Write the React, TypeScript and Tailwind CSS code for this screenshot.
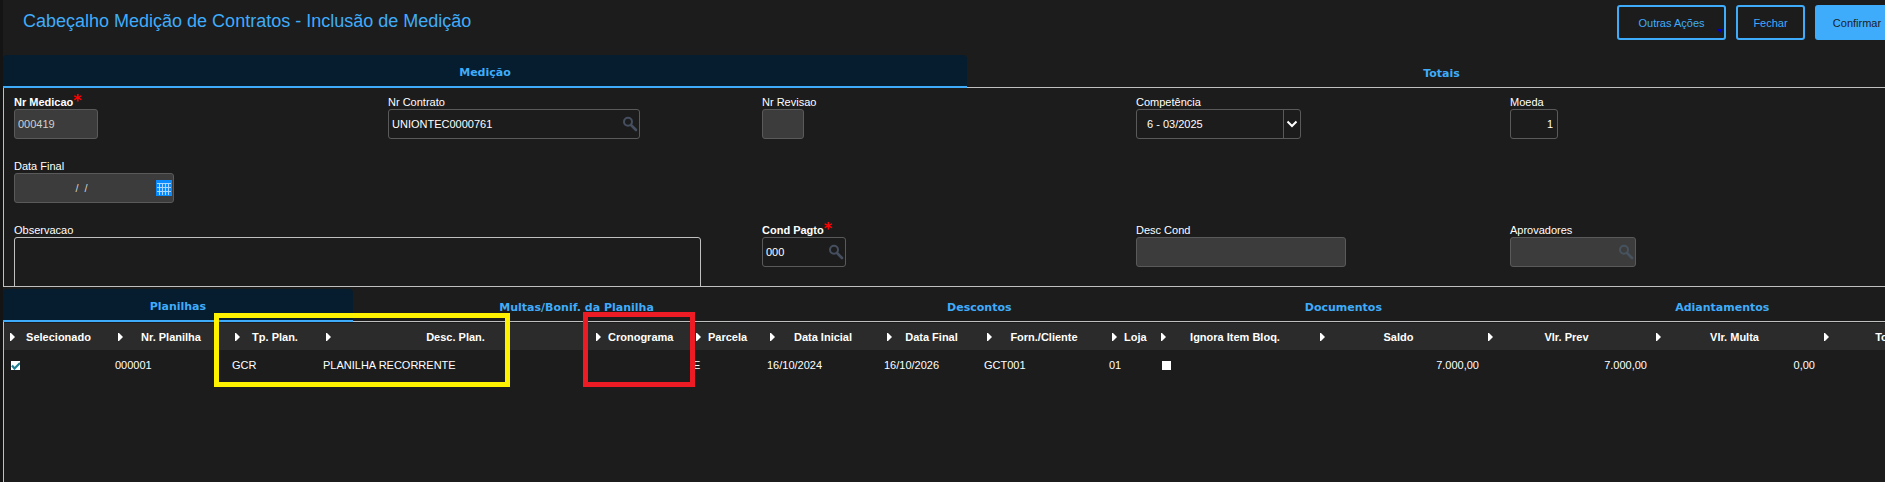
import React from 'react';
import clsx from 'clsx';

const SearchIcon: React.FC<{ dim?: boolean }> = ({ dim }) => (
  <svg
    width="16" height="16" viewBox="0 0 16 16" fill="none"
    className={clsx('shrink-0', dim ? 'text-[#46535f]' : 'text-[#454f60]')}
  >
    <circle cx="6" cy="5.8" r="4" stroke="currentColor" strokeWidth="2" />
    <path d="M9 9 L14 14" stroke="currentColor" strokeWidth="2.6" strokeLinecap="round" />
  </svg>
);

const CalendarIcon = () => (
  <svg width="16" height="16" viewBox="0 0 16 16" className="shrink-0" shapeRendering="crispEdges">
    <rect width="16" height="16" fill="#0a8cff" />
    <path d="M1 3.5H15M1 7.5H15M1 11.5H15M3.5 3V15M6.5 3V15M9.5 3V15M12.5 3V15" stroke="#a9d6ff" strokeWidth="1" />
  </svg>
);

const ChevronIcon = () => (
  <svg width="12" height="8" viewBox="0 0 12 8" fill="none">
    <path d="M1.5 1.5 L6 6 L10.5 1.5" stroke="#fff" strokeWidth="2" />
  </svg>
);

const Arrow = () => (
  <svg width="5" height="8" viewBox="0 0 5 8" className="shrink-0">
    <path d="M0 0 H1 L5 4 L1 8 H0 Z" fill="#fff" />
  </svg>
);

interface FieldProps {
  id: string;
  label: string;
  required?: boolean;
  className?: string;
  children: React.ReactNode;
}

const Field: React.FC<FieldProps> = ({ id, label, required, className, children }) => (
  <div className={clsx('flex flex-col items-start', className)}>
    <label htmlFor={id} className={clsx('flex h-[13px] items-baseline whitespace-nowrap', required && 'font-bold')}>
      <span className="leading-[12px]">{label}</span>
      {required && <span className="font-['DejaVu_Sans',sans-serif] text-base leading-[10px] text-[#ff0000]">*</span>}
    </label>
    {children}
  </div>
);

interface BoxProps {
  id: string;
  width: string;
  value?: string;
  disabled?: boolean;
  inputClass?: string;
  icon?: React.ReactNode;
}

const InputBox: React.FC<BoxProps> = ({ id, width, value = '', disabled, inputClass = 'px-[3px]', icon }) => (
  <div className={clsx('flex h-[30px] items-center rounded-[3px] border border-[#5a5a5a] pr-px', width, disabled ? 'bg-[#3c3c3c] text-[#d0d0d0]' : 'text-white')}>
    <input id={id} defaultValue={value} readOnly={disabled} className={clsx('min-w-0 flex-1 bg-transparent outline-none', inputClass)} />
    {icon}
  </div>
);

const Tabs: React.FC<{ tabs: string[] }> = ({ tabs }) => (
  <div role="tablist" className="flex h-[33px] font-['Verdana','DejaVu_Sans',sans-serif] font-bold text-[#3facfb]">
    {tabs.map((tab, i) => (
      <button
        key={tab}
        role="tab"
        aria-selected={i === 0}
        className={clsx(
          'flex-auto whitespace-nowrap pt-[6px]',
          i === 0 ? 'rounded-t-[4px] border-b-2 border-[#3facfb] bg-[#051d2f]' : 'border-b border-[#c0c0c0]'
        )}
      >
        {tab}
      </button>
    ))}
  </div>
);

const columns = [
  { title: 'Selecionado', width: 'w-[108px]' },
  { title: 'Nr. Planilha', width: 'w-[117px]' },
  { title: 'Tp. Plan.', width: 'w-[91px]' },
  { title: 'Desc. Plan.', width: 'w-[270px]' },
  { title: 'Cronograma', width: 'w-[100px]' },
  { title: 'Parcela', width: 'w-[74px]' },
  { title: 'Data Inicial', width: 'w-[117px]' },
  { title: 'Data Final', width: 'w-[100px]' },
  { title: 'Forn./Cliente', width: 'w-[125px]' },
  { title: 'Loja', width: 'w-[49px]' },
  { title: 'Ignora Item Bloq.', width: 'w-[159px]' },
  { title: 'Saldo', width: 'w-[168px]' },
  { title: 'Vlr. Prev', width: 'w-[168px]' },
  { title: 'Vlr. Multa', width: 'w-[168px]' },
  { title: 'Total Prev.', width: 'w-[168px]' },
];

const row: (string | boolean)[] = [
  true, '000001', 'GCR', 'PLANILHA RECORRENTE', '', 'E', '16/10/2024', '16/10/2026',
  'GCT001', '01', false, '7.000,00', '7.000,00', '0,00', '',
];

const GridCheck: React.FC<{ checked: boolean; label: string }> = ({ checked, label }) => (
  <span className="relative ml-1 block size-[9px]">
    <input type="checkbox" defaultChecked={checked} aria-label={label} className="block size-[9px] appearance-none bg-white" />
    {checked && (
      <svg width="9" height="9" viewBox="0 0 9 9" fill="none" className="pointer-events-none absolute inset-0">
        <path d="M1 4.5 L3.5 7.5 L9 2" stroke="#1f7f92" strokeWidth="2.2" />
      </svg>
    )}
  </span>
);

const outlineBtn = 'rounded-[3px] border-2 border-[#3facfb] text-[#3facfb]';

const App: React.FC = () => (
  <div className="min-h-screen overflow-hidden bg-[#1c1c1c] font-['Liberation_Sans',Arial,sans-serif] text-[11px] text-white">
    {/* the form is a little wider than the window and runs off its right edge */}
    <div className="-mr-[31px] flex min-h-screen flex-col border-l-[3px] border-[#141414]">
      <header className="flex h-[55px] items-start justify-between pl-5 pr-[17px] pt-[5px]">
        <h1 className="text-[18px] leading-8 text-[#3facfb]">Cabeçalho Medição de Contratos - Inclusão de Medição</h1>
        <div className="flex h-[35px] gap-[10px]">
          <button className={clsx(outlineBtn, 'relative w-[109px] pt-px')}>
            Outras Ações
            <span className="absolute bottom-[5px] right-px border-x-[3px] border-t-4 border-x-transparent border-t-[#0000c0]" />
          </button>
          <button className={clsx(outlineBtn, 'w-[69px] pt-px')}>Fechar</button>
          <button className="w-[84px] rounded-[3px] bg-[#3facfb] pt-px text-[#1c1c1c]">Confirmar</button>
        </div>
      </header>

      <Tabs tabs={['Medição', 'Totais']} />
      <section className="h-[199px] overflow-hidden border-b border-l border-[#c0c0c0]">
        <form className="grid grid-cols-5 gap-y-[21px] pl-[10px] pr-[32px] pt-2">
          <Field id="nrMedicao" label="Nr Medicao" required>
            <InputBox id="nrMedicao" width="w-[84px]" value="000419" disabled />
          </Field>
          <Field id="nrContrato" label="Nr Contrato">
            <InputBox id="nrContrato" width="w-[252px]" value="UNIONTEC0000761" icon={<SearchIcon />} />
          </Field>
          <Field id="nrRevisao" label="Nr Revisao">
            <InputBox id="nrRevisao" width="w-[42px]" disabled />
          </Field>
          <Field id="competencia" label="Competência">
            <div className="relative flex h-[30px] w-[165px] rounded-[3px] border border-[#5a5a5a]">
              <select id="competencia" className="w-full appearance-none bg-transparent pl-[10px] outline-none">
                <option>6 - 03/2025</option>
              </select>
              <span className="pointer-events-none absolute inset-y-0 right-0 flex w-[17px] items-center justify-center border-l border-[#5a5a5a]">
                <ChevronIcon />
              </span>
            </div>
          </Field>
          <Field id="moeda" label="Moeda">
            <InputBox id="moeda" width="w-[48px]" value="1" inputClass="px-[3px] text-right" />
          </Field>

          <Field id="dataFinal" label="Data Final" className="col-span-5">
            <InputBox id="dataFinal" width="w-[160px]" value="/  /" disabled inputClass="whitespace-pre pl-[3px] pr-[11px] text-center" icon={<CalendarIcon />} />
          </Field>

          <Field id="observacao" label="Observacao" className="col-span-2">
            <textarea id="observacao" className="h-[70px] w-[687px] resize-none rounded-[3px] border border-[#c0c0c0] bg-transparent p-1 outline-none" />
          </Field>
          <Field id="condPagto" label="Cond Pagto" required>
            <InputBox id="condPagto" width="w-[84px]" value="000" icon={<SearchIcon />} />
          </Field>
          <Field id="descCond" label="Desc Cond">
            <InputBox id="descCond" width="w-[210px]" disabled />
          </Field>
          <Field id="aprovadores" label="Aprovadores">
            <InputBox id="aprovadores" width="w-[126px]" disabled icon={<SearchIcon dim />} />
          </Field>
        </form>
      </section>

      <div className="relative mt-[2px] flex flex-1 flex-col">
        <Tabs tabs={['Planilhas', 'Multas/Bonif. da Planilha', 'Descontos', 'Documentos', 'Adiantamentos']} />
        <section className="flex-1 border-l border-[#c0c0c0] pt-px">
          <table className="w-full table-fixed whitespace-nowrap">
            <colgroup>
              {columns.map((c) => <col key={c.title} className={c.width} />)}
            </colgroup>
            <thead className="bg-[#2b2b2b]">
              <tr className="h-[27px]">
                {columns.map((c) => (
                  <th key={c.title} scope="col" className="p-0 pt-px">
                    <div className="flex items-center gap-[7px] pl-[6px] pr-[17px]">
                      <Arrow />
                      <span className="flex-1 text-center">{c.title}</span>
                    </div>
                  </th>
                ))}
              </tr>
            </thead>
            <tbody>
              <tr className="h-[30px]">
                {row.map((cell, i) => (
                  <td key={columns[i].title} className={clsx('px-[3px] py-0', i > 10 && 'text-right')}>
                    {typeof cell === 'boolean' ? <GridCheck checked={cell} label={columns[i].title} /> : cell}
                  </td>
                ))}
              </tr>
            </tbody>
          </table>
        </section>

        {/* highlight frames */}
        <div className="pointer-events-none absolute left-[211px] top-6 h-[74px] w-[296px] border-5 border-[#fff200]" />
        <div className="pointer-events-none absolute left-[580px] top-[23px] h-[75px] w-[112px] border-5 border-[#ed1c24]" />
      </div>
    </div>
  </div>
);

export default App;
